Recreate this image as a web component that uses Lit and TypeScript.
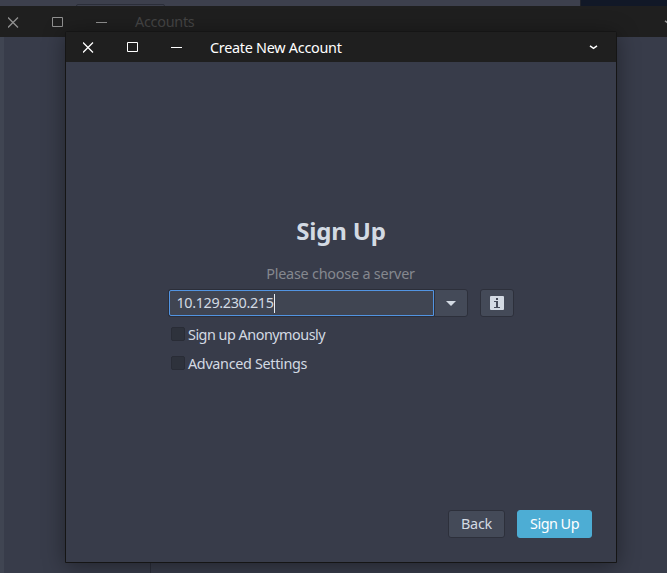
import { LitElement, html, css } from "lit";
import { customElement, property } from "lit/decorators.js";

@customElement("title-bar")
class TitleBar extends LitElement {
  @property() label = "";

  static styles = css`
    :host { display: flex; align-items: center; height: 100%; color: inherit; }
    svg { flex: none; display: block; }
    .controls { width: 99px; height: 11px; }
    .label { margin-left: 28px; flex: 1; white-space: nowrap; line-height: 20px; letter-spacing: -0.27px; color: var(--title-color, #fff); }
    .menu { width: 9px; height: 5px; }
  `;

  render() {
    return html`
      <svg class="controls" viewBox="0 0 99 11" fill="none" stroke="currentColor">
        <path d="M0 .5l10 10M10 .5l-10 10" stroke-width="1.25" />
        <path d="M44.5.5h10v9h-10z" />
        <path d="M88 5.5h11" />
      </svg>
      <span class="label">${this.label}</span>
      <svg class="menu" viewBox="0 0 9 5" fill="none" stroke="currentColor" stroke-width="1.5">
        <path d="M1 .8l3.5 2.5L8 .8" />
      </svg>
    `;
  }
}

@customElement("app-root")
class AppRoot extends LitElement {
  static styles = css`
    :host { display: block; position: relative; width: 667px; height: 573px; overflow: hidden; background: #3d404d; font: 14.4px/20px "Noto Sans", sans-serif; color: #d3dae3; }
    * { box-sizing: border-box; }
    .desktop { position: absolute; left: 580px; top: 0; width: 87px; height: 6px; background: #111827; border-left: 1px solid #20232b; }
    .tab { position: absolute; left: 76px; top: 4px; width: 89px; height: 4px; border: 1px solid #2b2e39; border-radius: 3px; }
    .accounts { position: absolute; left: 0; top: 6px; width: 676px; height: 567px; background: #383c4a; display: flex; flex-direction: column; }
    .accounts .bar { height: 31px; flex: none; background: #1f1f1f; padding: 1px 3px 0 8px; color: #919191; --title-color: #454545; }
    .accounts .body { flex: 1; display: flex; }
    .edge { width: 4px; background: #404552; }
    .list { width: 147px; border-right: 1px solid #2b2e39; }
    .dialog { position: absolute; left: 65px; top: 31px; width: 552px; height: 532px; border: 1px solid #151515; border-radius: 2px 2px 0 0; background: #383c4a; box-shadow: 0 3px 22px rgba(0, 0, 0, .4); display: flex; flex-direction: column; }
    .dialog > .bar { height: 30px; flex: none; background: #1f1f1f; color: #fff; padding: 1px 18px 0 17px; }
    .page { flex: 1; display: flex; flex-direction: column; padding: 153px 24px 24px 103px; }
    h1 { margin: 0; width: 344px; text-align: center; font-size: 24px; line-height: 32px; letter-spacing: -0.15px; }
    .hint { margin: 17px 0 5px; width: 343px; text-align: center; color: #85888f; letter-spacing: -0.22px; }
    .server { display: flex; height: 28px; width: 345px; }
    .entry { width: 265px; height: 26px; margin-top: 1px; border: 1px solid #5294e2; border-radius: 2px 0 0 2px; box-shadow: 0 0 0 1px #2b2e39; background: #404552; padding: 0 6.5px; display: flex; align-items: center; letter-spacing: -0.36px; }
    .caret { width: 1px; height: 19px; background: #e8edf2; }
    .btn { display: flex; align-items: center; justify-content: center; border: 1px solid #2d303b; border-radius: 3px; background: #444a58; height: 28px; letter-spacing: -0.2px; }
    .drop { width: 34px; border-radius: 0 3px 3px 0; }
    .info { width: 34px; margin-left: 12px; }
    .check { display: flex; align-items: center; height: 20px; gap: 3px; padding-left: 2px; margin-top: 8px; letter-spacing: -0.5px; }
    .check + .check { margin-top: 9px; letter-spacing: -0.33px; }
    .box { width: 14px; height: 14px; border: 1px solid #292c36; border-radius: 2px; background: #2e323c; position: relative; top: -1px; }
    .actions { margin-top: auto; display: flex; justify-content: flex-end; gap: 12px; }
    .back { width: 57px; }
    .primary { width: 75px; border-color: #4dadd4; background: #4dadd4; color: #fff; letter-spacing: -0.5px; }
    svg { display: block; }
  `;

  render() {
    return html`
      <div class="desktop"></div>
      <div class="tab"></div>
      <section class="accounts">
        <div class="bar"><title-bar label="Accounts"></title-bar></div>
        <div class="body"><div class="edge"></div><div class="list"></div></div>
      </section>
      <section class="dialog">
        <div class="bar"><title-bar label="Create New Account"></title-bar></div>
        <div class="page">
          <h1>Sign Up</h1>
          <div class="hint">Please choose a server</div>
          <div class="server">
            <div class="entry"><span>10.129.230.215</span><i class="caret"></i></div>
            <div class="btn drop">
              <svg width="10" height="5" viewBox="0 0 10 5"><path d="M0 0h10L5 5z" fill="#d3dae3" /></svg>
            </div>
            <div class="btn info">
              <svg width="14" height="14" viewBox="0 0 14 14">
                <rect width="14" height="14" rx="1" fill="#d3dae3" />
                <path d="M6 2h2v2H6zM4 5h4v6h2v1H4v-1h2V6H4z" fill="#444a58" />
              </svg>
            </div>
          </div>
          <div class="check"><i class="box"></i><span>Sign up Anonymously</span></div>
          <div class="check"><i class="box"></i><span>Advanced Settings</span></div>
          <div class="actions">
            <div class="btn back">Back</div>
            <div class="btn primary">Sign Up</div>
          </div>
        </div>
      </section>
    `;
  }
}
